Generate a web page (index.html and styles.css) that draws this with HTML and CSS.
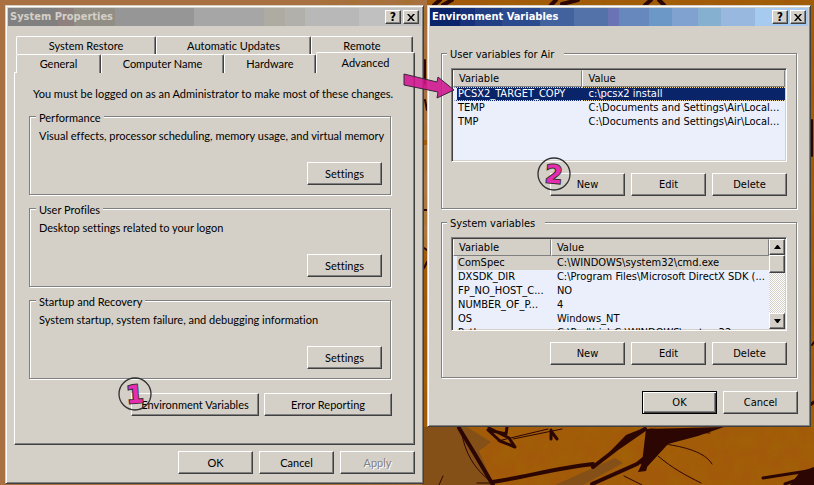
FILE: index.html
```
<!DOCTYPE html>
<html lang="en">
<head>
<meta charset="utf-8">
<title>System Properties</title>
<link rel="stylesheet" href="styles.css">
</head>
<body>
<svg class="wallpaper" viewBox="0 0 814 485" preserveAspectRatio="xMinYMin slice" aria-hidden="true">
  <defs>
    <filter id="paper" x="0" y="0" width="100%" height="100%">
      <feTurbulence type="fractalNoise" baseFrequency="0.06" numOctaves="4" seed="4"/>
      <feColorMatrix values="0 0 0 0 0.35  0 0 0 0 0.16  0 0 0 0 0  0.9 0 0 0 -0.3"/>
    </filter>
  </defs>
  <rect width="814" height="485" fill="#a97142"/>
  <path d="M320 0H814V485H424V140H427V0z" fill="#a25a0a"/>
  <path d="M422 145h6v105h-6z" fill="#b07a48"/>
  <rect x="320" width="494" height="485" filter="url(#paper)" opacity=".7"/>
  <path d="M422 427h45l24 15-12 9 15 34h-72z" fill="#845018"/>
  <path d="M555 485l60-27 8 5-40 22z" fill="#845018"/>
  <g fill="none" stroke="#2c0603" stroke-linecap="round" stroke-linejoin="round">
    <path stroke-width="4" d="M459 428l17 28 17 29M593 467l26-20 26-18M492 482c34-5 64-14 101-18M592 484l45-20 15-12"/>
    <path stroke-width="1" d="M461 430c4 24 13 38 30 52M477 483h15M439 485l4-9M498 441l50-12M513 439l49-10M665 444c20 3 40 8 47 20M658 456c14 12 27 19 43 27M624 476l18 9M650 429l60 4"/>
    <path stroke-width="3" d="M489 428l20 10 6 9-15-6-12-11 18 4 1-7M551 430v9m0-8l6 8M763 478l51-8M785 484l29-10M810 405l4-3"/>
    <path stroke-width="2" d="M425 60v24M425 100l2 10M424 210h3M424 248l3 2M424 268l3-6M812 120v36M812 345l2-3"/>
    <path stroke-width="4" d="M434 5l6-5M443 5l9-5M551 5l5-5M562 4l16-4M645 5l6-5M664 5l-5-5"/>
  </g>
  <path fill="#2c0603" d="M646 429l78-2-26 9-30 8-21 23-7-3 13-17-7 24-8 1 10-22-6 13zM790 485l10-13 14-5v18zM596 466l30-31 20-8-27 20z"/>
</svg>

<main class="desktop">
  <section class="window" aria-labelledby="title-system">
    <header class="titlebar titlebar-inactive">
      <h1 id="title-system">System Properties</h1>
      <button class="caption-button" type="button" aria-label="Help">?</button>
      <button class="caption-button" type="button" aria-label="Close"><svg viewBox="0 0 8 7"><path d="M0 0h2l2 2.500L6 0h2L5 3.500 8 7H6L4 4.500 2 7H0l3-3.500z"/></svg></button>
    </header>
    <div class="system-body">
      <div class="tabs" role="tablist">
        <div class="tab-row tab-row-back">
          <button class="tab" type="button" role="tab">System Restore</button>
          <button class="tab" type="button" role="tab">Automatic Updates</button>
          <button class="tab" type="button" role="tab">Remote</button>
        </div>
        <div class="tab-row tab-row-front">
          <button class="tab" type="button" role="tab">General</button>
          <button class="tab" type="button" role="tab">Computer Name</button>
          <button class="tab" type="button" role="tab">Hardware</button>
          <button class="tab tab-active" type="button" role="tab" aria-selected="true">Advanced</button>
        </div>
      </div>
      <div class="tab-panel" role="tabpanel">
        <p class="notice">You must be logged on as an Administrator to make most of these changes.</p>
        <fieldset class="group settings-group">
          <legend>Performance</legend>
          <p>Visual effects, processor scheduling, memory usage, and virtual memory</p>
          <div class="button-row"><button class="button" type="button">Settings</button></div>
        </fieldset>
        <fieldset class="group settings-group">
          <legend>User Profiles</legend>
          <p>Desktop settings related to your logon</p>
          <div class="button-row"><button class="button" type="button">Settings</button></div>
        </fieldset>
        <fieldset class="group settings-group">
          <legend>Startup and Recovery</legend>
          <p>System startup, system failure, and debugging information</p>
          <div class="button-row"><button class="button" type="button">Settings</button></div>
        </fieldset>
        <div class="button-row panel-buttons">
          <span class="marked">
            <button class="button button-wide" type="button">Environment Variables</button>
            <svg class="marker" viewBox="0 0 34 34" aria-hidden="true"><circle cx="17" cy="17" r="16"/><text x="17" y="26" transform="rotate(-5 17 17)">1</text></svg>
          </span>
          <button class="button button-wide" type="button">Error Reporting</button>
        </div>
      </div>
      <div class="button-row dialog-buttons">
        <button class="button" type="button">OK</button>
        <button class="button" type="button">Cancel</button>
        <button class="button" type="button" disabled>Apply</button>
      </div>
    </div>
  </section>

  <section class="window environment" aria-labelledby="title-env">
    <header class="titlebar titlebar-active">
      <h1 id="title-env">Environment Variables</h1>
      <button class="caption-button" type="button" aria-label="Help">?</button>
      <button class="caption-button" type="button" aria-label="Close"><svg viewBox="0 0 8 7"><path d="M0 0h2l2 2.500L6 0h2L5 3.500 8 7H6L4 4.500 2 7H0l3-3.500z"/></svg></button>
    </header>
    <div class="environment-body">
      <fieldset class="group variables-group">
        <legend>User variables for Air</legend>
        <div class="list">
          <table class="user-table">
            <thead><tr><th>Variable</th><th>Value</th></tr></thead>
            <tbody>
              <tr class="selected"><td>PCSX2_TARGET_COPY</td><td>c:\pcsx2 install</td></tr>
              <tr><td>TEMP</td><td>C:\Documents and Settings\Air\Local...</td></tr>
              <tr><td>TMP</td><td>C:\Documents and Settings\Air\Local...</td></tr>
            </tbody>
          </table>
        </div>
        <div class="button-row">
          <span class="marked">
            <button class="button" type="button">New</button>
            <svg class="marker" viewBox="0 0 34 34" aria-hidden="true"><circle cx="17" cy="17" r="16"/><text x="17" y="26" transform="rotate(5 17 17)">2</text></svg>
          </span>
          <button class="button" type="button">Edit</button>
          <button class="button" type="button">Delete</button>
        </div>
      </fieldset>
      <fieldset class="group variables-group">
        <legend>System variables</legend>
        <div class="list">
          <table class="system-table">
            <thead><tr><th>Variable</th><th>Value</th></tr></thead>
            <tbody>
              <tr class="selected-idle"><td>ComSpec</td><td>C:\WINDOWS\system32\cmd.exe</td></tr>
              <tr><td>DXSDK_DIR</td><td>C:\Program Files\Microsoft DirectX SDK (...</td></tr>
              <tr><td>FP_NO_HOST_C...</td><td>NO</td></tr>
              <tr><td>NUMBER_OF_P...</td><td>4</td></tr>
              <tr><td>OS</td><td>Windows_NT</td></tr>
              <tr><td>Path</td><td>C:\Perl\bin\;C:\WINDOWS\system32;</td></tr>
            </tbody>
          </table>
          <div class="scrollbar">
            <button class="scroll-button" type="button" aria-label="Scroll up"><svg viewBox="0 0 7 4"><path d="M3 0h1l3 4H0z"/></svg></button>
            <div class="scroll-thumb"></div>
            <button class="scroll-button scroll-down" type="button" aria-label="Scroll down"><svg viewBox="0 0 7 4"><path d="M0 0h7L4 4H3z"/></svg></button>
          </div>
        </div>
        <div class="button-row">
          <button class="button" type="button">New</button>
          <button class="button" type="button">Edit</button>
          <button class="button" type="button">Delete</button>
        </div>
      </fieldset>
      <div class="button-row dialog-buttons">
        <button class="button button-default" type="button">OK</button>
        <button class="button" type="button">Cancel</button>
      </div>
    </div>
    <svg class="arrow" viewBox="0 0 56 28" aria-hidden="true"><path d="M4 2l33 8 1-5 16 13-17 8 1-6-34-7z"/></svg>
  </section>
</main>
</body>
</html>
```

FILE: styles.css
```
:root {
  --face: #d4d0c8;
  --light: #fff;
  --shadow: #808080;
  --dark: #404040;
  --list: #eaeffb;
  --navy: #0a246a;
}

* { box-sizing: border-box; }

body {
  margin: 0;
  min-height: 100vh;
  overflow: hidden;
  background: #a97142;
  color: #000;
  font: 11px/14px Lato, "Liberation Sans", sans-serif;
  font-variant-ligatures: none;
}

h1, p { margin: 0; }

button {
  margin: 0;
  padding: 0;
  color: inherit;
  font: inherit;
  font-variant-ligatures: none;
  white-space: nowrap;
}

.wallpaper {
  position: absolute;
  inset: 0;
  width: 100%;
  height: 100%;
}

.desktop {
  position: relative;
  display: grid;
  grid-template-columns: 419fr 384fr;
  gap: 3px;
  align-items: start;
  padding: 5px 3px 0 5px;
}

.window {
  position: relative;
  min-width: 0;
  padding: 2px;
  border: 1px solid;
  border-color: var(--face) var(--dark) var(--dark) var(--face);
  background: var(--face);
  box-shadow: inset 1px 1px var(--light), inset -1px -1px var(--shadow);
}

.environment {
  font: 11px/14px "DejaVu Sans Condensed", "DejaVu Sans", sans-serif;
}

.titlebar {
  display: flex;
  align-items: center;
  gap: 2px;
  height: 18px;
  padding: 0 2px;
}

.titlebar h1 {
  flex: 1;
  font: bold 11px/18px "DejaVu Sans Condensed", "DejaVu Sans", sans-serif;
  white-space: nowrap;
}

.titlebar-inactive {
  color: #d4d0c8;
  background: linear-gradient(90deg, #808080 12%, #8f8080 12% 16%, #908e85 16% 26%, #969696 26% 45%, #a6a6a6 45% 62%, #aeaba3 62% 67%, #b2b0aa 67% 72%, #b8b8b8 72% 85%, #c0c0c0 85%);
}

.titlebar-active {
  color: #fff;
  background: linear-gradient(90deg, #0a246a 8%, #17317a 8% 12%, #233f84 12% 19%, #2c4a8e 19% 29%, #42629e 29% 38%, #5472aa 38% 47%, #6a74b4 47% 50%, #6788bc 50% 58%, #6c98c8 58% 64%, #7fa2d0 64% 71%, #86b0d0 71% 77%, #98b8e0 77% 86%, #a6caf0 86%);
}

.caption-button,
.scroll-button,
.scroll-thumb,
.button {
  border: 1px solid;
  border-color: var(--light) var(--dark) var(--dark) var(--light);
  border-radius: 0;
  background: var(--face);
  box-shadow: inset -1px -1px var(--shadow);
}

.caption-button {
  display: grid;
  place-items: center;
  width: 16px;
  height: 14px;
  color: #000;
  font: bold 12px/12px "DejaVu Sans Condensed", sans-serif;
}

.caption-button svg { width: 8px; height: 7px; }

.button {
  position: relative;
  width: 75px;
  height: 23px;
}

.button-wide { width: 128px; }

.button-default {
  border-color: #000;
  box-shadow: inset 1px 1px var(--light), inset -1px -1px var(--dark), inset -2px -2px var(--shadow);
}

.button:disabled { color: var(--shadow); text-shadow: 1px 1px var(--light); }

.button-row {
  display: flex;
  justify-content: flex-end;
  gap: 6px;
}

.system-body { padding: 10px 6px 7px; }

.tab-row { display: grid; height: 18px; }

.tab-row-back {
  grid-template-columns: 140fr 155fr 102fr;
  margin: 0 2px;
}

.tab-row-front {
  grid-template-columns: 85fr 123fr 92fr 99fr;
  margin-left: 2px;
}

.tab {
  border: 1px solid;
  border-color: var(--light) var(--dark) transparent var(--light);
  border-bottom: 0;
  border-radius: 2px 2px 0 0;
  background: var(--face);
  box-shadow: inset -1px 0 var(--shadow);
}

.tab-active {
  position: relative;
  z-index: 1;
  height: 21px;
  margin-top: -2px;
}

.tab-panel {
  padding: 14px 22px 28px 14px;
  border: 1px solid;
  border-color: var(--light) var(--dark) var(--dark) var(--light);
  box-shadow: inset -1px -1px var(--shadow);
}

.notice { margin-bottom: 8px; padding-left: 4px; white-space: nowrap; }

.group {
  min-width: 0;
  margin: 0 1px 6px 0;
  border: 1px solid var(--shadow);
  box-shadow: 1px 1px var(--light), inset 1px 1px var(--light);
}

.group legend {
  margin-left: -4px;
  padding: 4px 3px 0;
  background: var(--face);
  line-height: 10px;
}

.settings-group { padding: 6px 8px 9px 9px; }

.settings-group legend { margin-left: -3px; }

.settings-group p { margin-bottom: 19px; white-space: nowrap; }

.panel-buttons { margin-top: 14px; gap: 5px; }

.system-body .dialog-buttons { margin-top: 6px; }

.environment-body { padding: 20px 10px 10px 11px; }

.variables-group { padding: 8px 9px 12px; }

.variables-group legend { padding-right: 10px; }

.environment-body .dialog-buttons { margin-top: 13px; }

.list {
  display: flex;
  align-items: flex-start;
  height: 94px;
  margin-bottom: 11px;
  padding: 1px;
  overflow: hidden;
  border: 1px solid;
  border-color: var(--shadow) var(--light) var(--light) var(--shadow);
  background: var(--list);
  box-shadow: inset 1px 1px var(--dark), inset -1px -1px var(--face);
}

.list table {
  flex: 1;
  min-width: 0;
  table-layout: fixed;
  border-spacing: 0;
}

.list th {
  height: 17px;
  padding: 0 5px;
  border: 1px solid;
  border-color: var(--face) var(--shadow) var(--shadow) var(--light);
  background: var(--face);
  font-weight: normal;
  line-height: 15px;
  text-align: left;
}

.list td {
  height: 14px;
  padding: 0 2px 0 1px;
  overflow: hidden;
  line-height: 14px;
  white-space: nowrap;
}

.list td:first-child { border-left: 4px solid var(--list); }

.list td:last-child { padding-left: 6px; }

.user-table th:first-child { width: 39%; }

.system-table th:first-child { width: 31%; }

.selected td {
  border: 1px dotted #f5db95;
  border-width: 1px 0;
  background: var(--navy);
  color: #fff;
  line-height: 12px;
}

.selected-idle td { background: var(--face); }

.scrollbar {
  display: flex;
  flex-direction: column;
  width: 16px;
  height: 90px;
  background: repeating-conic-gradient(#fff 0 25%, #d4d0c8 0 50%) 0 0 / 2px 2px;
}

.scroll-button {
  display: grid;
  place-items: center;
  width: 16px;
  height: 16px;
}

.scroll-button svg { width: 7px; height: 4px; }

.scroll-thumb { height: 18px; }

.scroll-down { margin-top: auto; }

.marked { position: relative; }

.marker {
  position: absolute;
  top: -16px;
  left: -13px;
  width: 34px;
  height: 34px;
}

.marker circle { fill: none; stroke: #303030; stroke-width: 1.3; }

.marker text {
  fill: #e62cb0;
  stroke: #303030;
  stroke-width: 2;
  paint-order: stroke;
  font: bold 25px "DejaVu Sans", sans-serif;
  text-anchor: middle;
}

.arrow {
  position: absolute;
  top: 66px;
  left: -28px;
  width: 56px;
  height: 28px;
  fill: #d01490;
  fill-opacity: .88;
  stroke: #382838;
}
```
